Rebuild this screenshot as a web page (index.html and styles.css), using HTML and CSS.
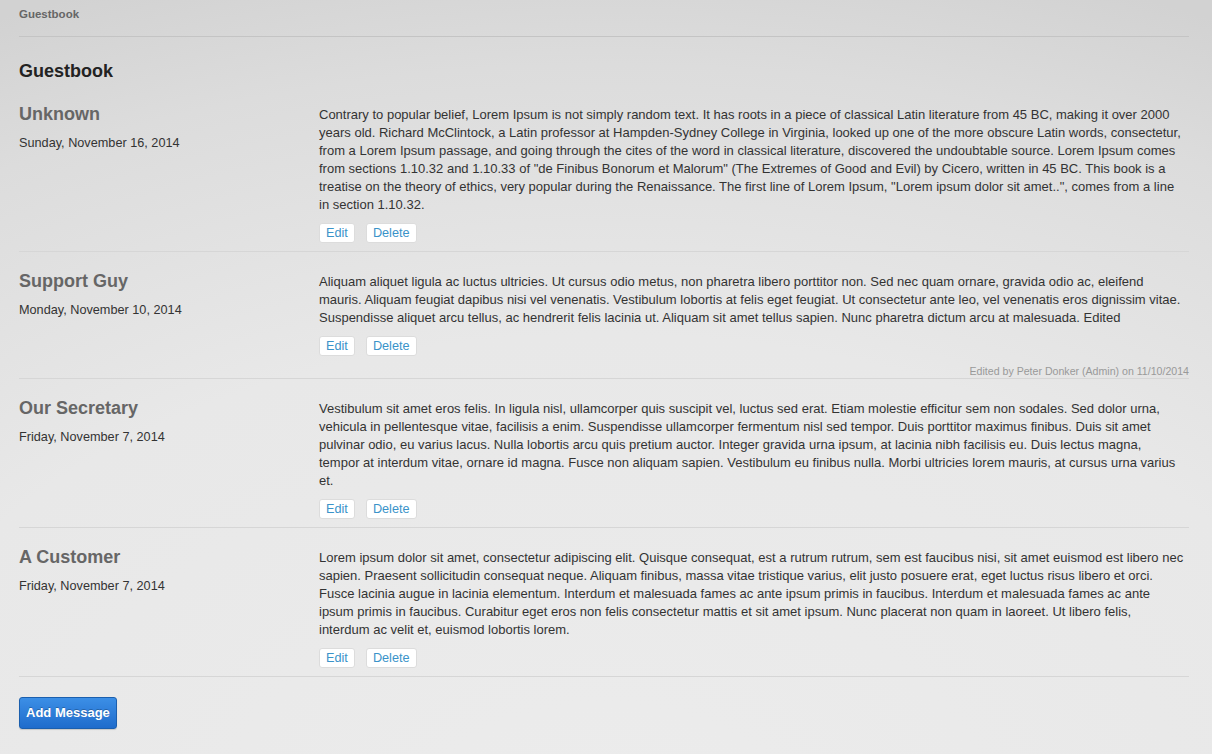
FILE: index.html
```html
<!DOCTYPE html>
<html>
<head>
<meta charset="utf-8">
<link rel="stylesheet" href="styles.css">
</head>
<body>
<div class="page">
  <div class="crumb">Guestbook</div>
  <h1 class="title">Guestbook</h1>

  <div class="entry">
    <div class="who">
      <div class="name">Unknown</div>
      <div class="date">Sunday, November 16, 2014</div>
    </div>
    <div class="msg">
      <p>Contrary to popular belief, Lorem Ipsum is not simply random text. It has roots in a piece of classical Latin literature from 45 BC, making it over 2000 years old. Richard McClintock, a Latin professor at Hampden-Sydney College in Virginia, looked up one of the more obscure Latin words, consectetur, from a Lorem Ipsum passage, and going through the cites of the word in classical literature, discovered the undoubtable source. Lorem Ipsum comes from sections 1.10.32 and 1.10.33 of "de Finibus Bonorum et Malorum" (The Extremes of Good and Evil) by Cicero, written in 45 BC. This book is a treatise on the theory of ethics, very popular during the Renaissance. The first line of Lorem Ipsum, "Lorem ipsum dolor sit amet..", comes from a line in section 1.10.32.</p>
      <div class="actions"><a class="btn">Edit</a><a class="btn">Delete</a></div>
    </div>
  </div>

  <div class="entry has-note">
    <div class="who">
      <div class="name">Support Guy</div>
      <div class="date">Monday, November 10, 2014</div>
    </div>
    <div class="msg">
      <p>Aliquam aliquet ligula ac luctus ultricies. Ut cursus odio metus, non pharetra libero porttitor non. Sed nec quam ornare, gravida odio ac, eleifend mauris. Aliquam feugiat dapibus nisi vel venenatis. Vestibulum lobortis at felis eget feugiat. Ut consectetur ante leo, vel venenatis eros dignissim vitae. Suspendisse aliquet arcu tellus, ac hendrerit felis lacinia ut. Aliquam sit amet tellus sapien. Nunc pharetra dictum arcu at malesuada. Edited</p>
      <div class="actions"><a class="btn">Edit</a><a class="btn">Delete</a></div>
    </div>
    <div class="note">Edited by Peter Donker (Admin) on 11/10/2014</div>
  </div>

  <div class="entry">
    <div class="who">
      <div class="name">Our Secretary</div>
      <div class="date">Friday, November 7, 2014</div>
    </div>
    <div class="msg">
      <p>Vestibulum sit amet eros felis. In ligula nisl, ullamcorper quis suscipit vel, luctus sed erat. Etiam molestie efficitur sem non sodales. Sed dolor urna, vehicula in pellentesque vitae, facilisis a enim. Suspendisse ullamcorper fermentum nisl sed tempor. Duis porttitor maximus finibus. Duis sit amet pulvinar odio, eu varius lacus. Nulla lobortis arcu quis pretium auctor. Integer gravida urna ipsum, at lacinia nibh facilisis eu. Duis lectus magna, tempor at interdum vitae, ornare id magna. Fusce non aliquam sapien. Vestibulum eu finibus nulla. Morbi ultricies lorem mauris, at cursus urna varius et.</p>
      <div class="actions"><a class="btn">Edit</a><a class="btn">Delete</a></div>
    </div>
  </div>

  <div class="entry">
    <div class="who">
      <div class="name">A Customer</div>
      <div class="date">Friday, November 7, 2014</div>
    </div>
    <div class="msg">
      <p>Lorem ipsum dolor sit amet, consectetur adipiscing elit. Quisque consequat, est a rutrum rutrum, sem est faucibus nisi, sit amet euismod est libero nec sapien. Praesent sollicitudin consequat neque. Aliquam finibus, massa vitae tristique varius, elit justo posuere erat, eget luctus risus libero et orci. Fusce lacinia augue in lacinia elementum. Interdum et malesuada fames ac ante ipsum primis in faucibus. Interdum et malesuada fames ac ante ipsum primis in faucibus. Curabitur eget eros non felis consectetur mattis et sit amet ipsum. Nunc placerat non quam in laoreet. Ut libero felis, interdum ac velit et, euismod lobortis lorem.</p>
      <div class="actions"><a class="btn">Edit</a><a class="btn">Delete</a></div>
    </div>
  </div>

  <div class="footer"><a class="primary">Add Message</a></div>
</div>
</body>
</html>
```
FILE: styles.css
```css
html, body {
  margin: 0;
  padding: 0;
}
body {
  min-height: 754px;
  font-family: "Liberation Sans", Arial, sans-serif;
  font-size: 12.7px;
  color: #333;
  background: radial-gradient(ellipse 1400px 900px at 50% 110%, #ececec 0%, #e8e8e8 55%, #dcdcdc 85%, #d2d2d2 100%);
}
.page {
  margin: 0 23px 0 19px;
  padding-top: 6px;
}
.crumb {
  font-size: 11.5px;
  line-height: 16px;
  font-weight: bold;
  color: #666;
  padding-bottom: 14px;
  border-bottom: 1px solid #c4c4c4;
}
.title {
  margin: 0;
  padding-top: 24px;
  font-size: 18px;
  line-height: 20px;
  font-weight: bold;
  color: #222;
}
.entry {
  display: grid;
  grid-template-columns: 300px 1fr;
  padding: 25px 0 8px;
  border-bottom: 1px solid #d6d6d6;
}
.entry + .entry {
  padding-top: 21px;
}
.entry.has-note {
  padding-bottom: 1px;
}
.who {
  margin-top: -1px;
}
.name {
  font-size: 18px;
  line-height: 18px;
  font-weight: bold;
  color: #666;
}
.date {
  margin-top: 11px;
  line-height: 18px;
  color: #333;
}
.msg {
  padding-right: 4px;
}
.msg p {
  margin: 0;
  font-size: 13px;
  line-height: 18px;
}
.actions {
  display: flex;
  gap: 11px;
  margin-top: 9px;
}
.btn {
  display: inline-block;
  height: 18px;
  line-height: 18px;
  padding: 0 6px;
  background: #fff;
  border: 1px solid #dcdcdc;
  border-radius: 3px;
  color: #3a93c9;
  font-size: 12.7px;
  cursor: pointer;
}
.note {
  grid-column: 1 / 3;
  margin-top: 9px;
  text-align: right;
  font-size: 10.6px;
  line-height: 12px;
  color: #999;
}
.footer {
  padding-top: 20px;
}
.primary {
  display: inline-block;
  height: 30px;
  line-height: 30px;
  padding: 0 6px;
  border: 1px solid #1b5fae;
  border-radius: 3px;
  background: linear-gradient(#3c8fe6, #1f6ccc);
  color: #fff;
  font-weight: bold;
  font-size: 13px;
  text-shadow: 0 -1px 0 rgba(0,0,0,0.25);
  box-shadow: 0 1px 1px rgba(0,0,0,0.15);
  cursor: pointer;
}
```
